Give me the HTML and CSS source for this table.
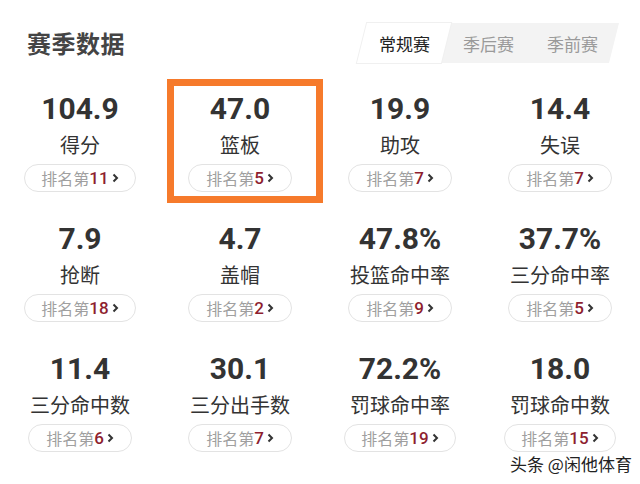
FILE: index.html
```html
<html>
  <head>
    <meta charset="utf-8">
    <title>赛季数据</title>
    <link rel="stylesheet" href="styles.css">
  </head>
  <body>
  <div id="wrapper">
    <div class="header">
      <h2 class="title">赛季数据</h2>
      <div class="tabs">
        <span class="tab active"><span>常规赛</span></span>
        <span class="tab"><span>季后赛</span></span>
        <span class="tab"><span>季前赛</span></span>
      </div>
    </div>
    <div class="stats">
      <div class="cell"><div class="num">104.9</div><div class="label">得分</div><span class="rank">排名第<b>11</b><svg width="7" height="10" viewBox="0 0 7 10"><path d="M1.5 1.5 L5 5 L1.5 8.5" /></svg></span></div>
      <div class="cell marked"><div class="num">47.0</div><div class="label">篮板</div><span class="rank">排名第<b>5</b><svg width="7" height="10" viewBox="0 0 7 10"><path d="M1.5 1.5 L5 5 L1.5 8.5" /></svg></span><div class="mark"></div></div>
      <div class="cell"><div class="num">19.9</div><div class="label">助攻</div><span class="rank">排名第<b>7</b><svg width="7" height="10" viewBox="0 0 7 10"><path d="M1.5 1.5 L5 5 L1.5 8.5" /></svg></span></div>
      <div class="cell"><div class="num">14.4</div><div class="label">失误</div><span class="rank">排名第<b>7</b><svg width="7" height="10" viewBox="0 0 7 10"><path d="M1.5 1.5 L5 5 L1.5 8.5" /></svg></span></div>

      <div class="cell"><div class="num">7.9</div><div class="label">抢断</div><span class="rank">排名第<b>18</b><svg width="7" height="10" viewBox="0 0 7 10"><path d="M1.5 1.5 L5 5 L1.5 8.5" /></svg></span></div>
      <div class="cell"><div class="num">4.7</div><div class="label">盖帽</div><span class="rank">排名第<b>2</b><svg width="7" height="10" viewBox="0 0 7 10"><path d="M1.5 1.5 L5 5 L1.5 8.5" /></svg></span></div>
      <div class="cell"><div class="num">47.8%</div><div class="label">投篮命中率</div><span class="rank">排名第<b>9</b><svg width="7" height="10" viewBox="0 0 7 10"><path d="M1.5 1.5 L5 5 L1.5 8.5" /></svg></span></div>
      <div class="cell"><div class="num">37.7%</div><div class="label">三分命中率</div><span class="rank">排名第<b>5</b><svg width="7" height="10" viewBox="0 0 7 10"><path d="M1.5 1.5 L5 5 L1.5 8.5" /></svg></span></div>

      <div class="cell"><div class="num">11.4</div><div class="label">三分命中数</div><span class="rank">排名第<b>6</b><svg width="7" height="10" viewBox="0 0 7 10"><path d="M1.5 1.5 L5 5 L1.5 8.5" /></svg></span></div>
      <div class="cell"><div class="num">30.1</div><div class="label">三分出手数</div><span class="rank">排名第<b>7</b><svg width="7" height="10" viewBox="0 0 7 10"><path d="M1.5 1.5 L5 5 L1.5 8.5" /></svg></span></div>
      <div class="cell"><div class="num">72.2%</div><div class="label">罚球命中率</div><span class="rank">排名第<b>19</b><svg width="7" height="10" viewBox="0 0 7 10"><path d="M1.5 1.5 L5 5 L1.5 8.5" /></svg></span></div>
      <div class="cell"><div class="num">18.0</div><div class="label">罚球命中数</div><span class="rank">排名第<b>15</b><svg width="7" height="10" viewBox="0 0 7 10"><path d="M1.5 1.5 L5 5 L1.5 8.5" /></svg></span></div>
    </div>
    <div class="watermark">头条 @闲他体育</div>
  </div>
  </body>
</html>
```

FILE: styles.css
```css
body { margin: 0px; background: #fff; font-family: "Noto Sans CJK SC", "Noto Sans", sans-serif; color: #333; }

#wrapper { position: relative; width: 640px; height: 484px; overflow: hidden; }

.header { height: 85px; display: flex; align-items: center; justify-content: space-between; padding: 0 26px 0 27px; box-sizing: border-box; }
.title { margin: 0; font-size: 24px; font-weight: bold; color: #444; letter-spacing: 0.5px; }

.tabs { display: flex; height: 40px; background: #f3f3f3; transform: skewX(-14deg); }
.tab { width: 84px; display: flex; align-items: center; justify-content: center; font-size: 17px; color: #9a9a9a; }
.tab span { transform: skewX(14deg); }
.tab.active { background: #fff; color: #222; box-shadow: 0 0 0 1px #f0f0f0; }

.stats { display: grid; grid-template-columns: repeat(4, 160px); grid-auto-rows: 130px; }
.cell { position: relative; display: flex; flex-direction: column; align-items: center; padding-top: 8px; box-sizing: border-box; }
.num { font-family: Roboto, "Noto Sans", sans-serif; font-weight: bold; font-size: 30px; line-height: 32px; color: #333; }
.label { margin-top: 6px; font-size: 20px; line-height: 28px; color: #333; }
.rank { margin-top: 5px; height: 28px; min-width: 104px; box-sizing: border-box; padding: 0 16px; border: 1.5px solid #e3e3e3; border-radius: 14px; display: flex; align-items: center; justify-content: center; font-size: 16px; color: #a0a0a0; }
.rank b { font-family: Roboto, "Noto Sans", sans-serif; font-weight: 500; color: #8e1f30; font-size: 17px; }
.rank svg { margin-left: 3px; }
.rank path { fill: none; stroke: #333; stroke-width: 2; }

.mark { position: absolute; left: 7px; top: -6px; width: 156px; height: 124px; box-sizing: border-box; border: 7px solid #f67a2b; }

.watermark { position: absolute; left: 510px; top: 451px; font-size: 17px; color: #222; text-shadow: 0 0 2px #fff, 0 0 2px #fff; }
```
